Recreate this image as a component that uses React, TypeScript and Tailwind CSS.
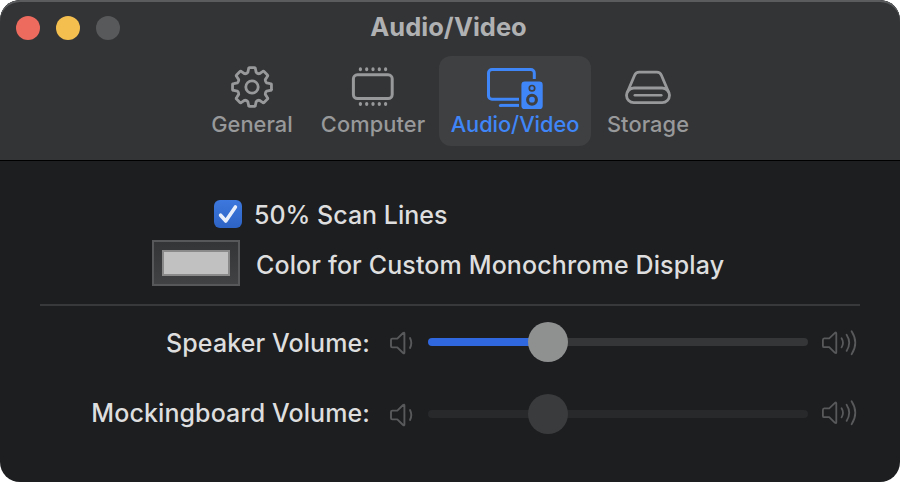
import type { ReactNode } from "react";

function gearPath() {
  const at = (r: number, deg: number) => {
    const a = ((deg - 90) * Math.PI) / 180;
    return `${(22 + r * Math.cos(a)).toFixed(2)} ${(22 + r * Math.sin(a)).toFixed(2)}`;
  };
  let d = "";
  for (let i = 0; i < 8; i++) {
    const t = i * 45;
    d += `${i === 0 ? "M" : "L"}${at(15.2, t - 16)} L${at(18.6, t - 10.5)} Q${at(19.8, t - 10)} ${at(19.6, t - 7)} L${at(19.6, t + 7)} Q${at(19.8, t + 10)} ${at(18.6, t + 10.5)} L${at(15.2, t + 16)} Q${at(14.2, t + 22.5)} ${at(15.2, t + 29)} `;
  }
  return d + "Z";
}

function GearIcon() {
  return (
    <svg width="44" height="44" viewBox="0 0 44 44" fill="none" stroke="currentColor" strokeWidth="2.8" strokeLinejoin="round">
      <path d={gearPath()} />
      <circle cx="22" cy="22" r="6.2" />
    </svg>
  );
}

function ChipIcon() {
  return (
    <svg width="44" height="44" viewBox="0 0 44 44" fill="none" stroke="currentColor">
      <rect x="2.4" y="9.8" width="38.8" height="23.7" rx="4" strokeWidth="3" />
      {[9.4, 15.7, 22, 28.3, 34.6].map((x) => (
        <path key={x} d={`M${x} 3.9v.7M${x} 38.6v.7`} strokeWidth="3.2" strokeLinecap="round" />
      ))}
    </svg>
  );
}

function DisplaySpeakerIcon() {
  return (
    <svg width="60" height="44" viewBox="485 65 60 44" fill="none" stroke="currentColor" className="overflow-visible">
      <path d="M534.3 79V73a3.5 3.5 0 0 0-3.5-3.5H492a3.5 3.5 0 0 0-3.5 3.5v22.7a3.5 3.5 0 0 0 3.5 3.5h27" strokeWidth="3" />
      <path d="M500.4 105.4H519" strokeWidth="3" />
      <circle cx="500.4" cy="105.4" r="1.5" fill="currentColor" stroke="none" />
      <rect x="521.4" y="81.6" width="21.3" height="27.5" rx="3.4" fill="currentColor" stroke="none" />
      <circle cx="532" cy="88.2" r="2.7" stroke="#3f4042" strokeWidth="1.7" />
      <circle cx="532" cy="99.7" r="4.4" stroke="#3f4042" strokeWidth="3.1" />
    </svg>
  );
}

function DriveIcon() {
  return (
    <svg width="48" height="44" viewBox="624 65 48 44" fill="none" stroke="currentColor" strokeWidth="2.8" strokeLinecap="round">
      <rect x="626.5" y="88" width="43" height="14.6" rx="7.3" />
      <path d="M627.8 91.2L634.6 75.2a5 5 0 0 1 4.7-3.1H656.7a5 5 0 0 1 4.7 3.1L668.2 91.2" />
      <path d="M634.8 95.2H661.3" strokeWidth="2.5" />
    </svg>
  );
}

function SpeakerLow() {
  return (
    <svg width="24" height="24" viewBox="390 331 24 24" fill="none" stroke="currentColor" strokeWidth="1.9" strokeLinecap="round" strokeLinejoin="round">
      <path d="M392.3 338.6h5l5.8-5.6q1.3-.9 1.3.6v18.8q0 1.5-1.3.6l-5.8-5.6h-5q-1.3 0-1.3-1.3v-6.2q0-1.3 1.3-1.3Z" />
      <path d="M410 338q2.6 5 0 10" />
    </svg>
  );
}

function SpeakerHigh() {
  return (
    <svg width="36" height="26" viewBox="822 330 36 26" fill="none" stroke="currentColor" strokeWidth="1.8" strokeLinecap="round" strokeLinejoin="round">
      <path d="M824.2 338.4h5l5.8-5.6q1.3-.9 1.3.6v18.8q0 1.5-1.3.6l-5.8-5.6h-5q-1.3 0-1.3-1.3v-5.9q0-1.6 1.3-1.6Z" />
      <path d="M841.6 338.2q2.8 4.6 0 9.2M846.6 334.7q5.2 8.1 0 16.2M851.6 331.3q7.4 11.5 0 23" />
    </svg>
  );
}

function Tab({ label, width, tracking, active, children }: { label: string; width: string; tracking: string; active?: boolean; children: ReactNode }) {
  return (
    <div className={`${width} flex h-[90px] flex-col items-center rounded-xl pt-[9px] ${active ? "bg-[#3f4042] text-[#3f86f8]" : "text-[#98999a]"}`}>
      {children}
      <span className={`${tracking} mt-[1px] text-[21.8px] leading-[28px] font-[460] whitespace-nowrap`}>{label}</span>
    </div>
  );
}

function VolumeRow({ label, enabled }: { label: string; enabled?: boolean }) {
  return (
    <div className="flex h-[40px] items-center text-[#58595a]">
      <span className={`w-[370px] shrink-0 text-right text-[25px] leading-[30px] font-[460] tracking-[0.1px] whitespace-nowrap text-[#dededf] ${enabled ? "mt-[2px]" : "mb-[2px]"}`}>{label}</span>
      <div className="ml-5 mt-[2px]"><SpeakerLow /></div>
      <div className="ml-[14px] flex w-[380px] items-center">
        <div className={`h-2 w-[104px] rounded-l-full ${enabled ? "bg-[#3068e0]" : "bg-[#28292b]"}`} />
        <div className={`relative z-10 -ml-1 size-10 shrink-0 rounded-full ${enabled ? "bg-[#8f9090]" : "bg-[#3a3b3c]"}`} />
        <div className={`-ml-1 h-2 flex-1 rounded-r-full ${enabled ? "bg-[#353637]" : "bg-[#28292b]"}`} />
      </div>
      <div className={`ml-[14px] ${enabled ? "mt-[2px]" : "mb-[2px]"}`}><SpeakerHigh /></div>
    </div>
  );
}

export default function App() {
  return (
    <div className="h-[482px] w-[900px] bg-white font-['Inter','Liberation_Sans',sans-serif]">
      <div className="flex h-full flex-col overflow-hidden rounded-[20px] bg-[#1d1e20]">
        <header className="h-[161px] shrink-0 rounded-t-[20px] border-b border-black bg-[#333436] shadow-[inset_0_2px_0_#5a5c5e]">
          <div className="flex h-14 items-center px-4">
            <div className="flex w-[104px] gap-4">
              <span className="size-6 rounded-full bg-[#ed6a5f]" />
              <span className="size-6 rounded-full bg-[#f5bf4f]" />
              <span className="size-6 rounded-full bg-[#58595b]" />
            </div>
            <h1 className="mb-[2px] w-[657px] text-center text-[25.5px] leading-[30px] font-bold whitespace-nowrap text-[#b0b1b2]">Audio/Video</h1>
          </div>
          <nav className="flex pl-[197px]">
            <Tab label="General" width="w-[110px]" tracking="tracking-[0.05px]"><GearIcon /></Tab>
            <Tab label="Computer" width="w-[132px]" tracking="tracking-[0.1px]"><ChipIcon /></Tab>
            <Tab label="Audio/Video" width="w-[152px]" tracking="-tracking-[0.05px]" active><DisplaySpeakerIcon /></Tab>
            <Tab label="Storage" width="w-[114px]" tracking="tracking-[0.1px]"><DriveIcon /></Tab>
          </nav>
        </header>
        <main className="flex flex-col pt-[39px] text-[25px] leading-[30px] font-[460] text-[#dededf]">
          <label className="flex h-7 items-center pl-[214px]">
            <span className="flex size-7 items-center justify-center rounded-[6px] bg-linear-to-b from-[#3d78de] to-[#2d63c4]">
              <svg width="28" height="28" viewBox="0 0 28 28" fill="none" stroke="#e8effb" strokeWidth="3.6" strokeLinecap="round" strokeLinejoin="round">
                <path d="M6.6 15.2L11.8 21L21.4 7" />
              </svg>
            </span>
            <span className="mt-[2px] ml-[12px] whitespace-nowrap">50% Scan Lines</span>
          </label>
          <div className="mt-3 flex h-[46px] items-center pl-[152px]">
            <span className="flex h-[46px] w-[88px] items-center justify-center border-2 border-[#57585a] bg-linear-to-b from-[#343537] to-[#414244]">
              <span className="h-[26px] w-[68px] border-2 border-[#8a8a8a] bg-[#c1c1c1]" />
            </span>
            <span className="mt-[3px] ml-4 tracking-[0.13px] whitespace-nowrap">Color for Custom Monochrome Display</span>
          </div>
          <div className="mx-10 mt-[18px] h-[2px] bg-[#38393b]" />
          <div className="mt-4 flex flex-col gap-8">
            <VolumeRow label="Speaker Volume:" enabled />
            <VolumeRow label="Mockingboard Volume:" />
          </div>
        </main>
      </div>
    </div>
  );
}
